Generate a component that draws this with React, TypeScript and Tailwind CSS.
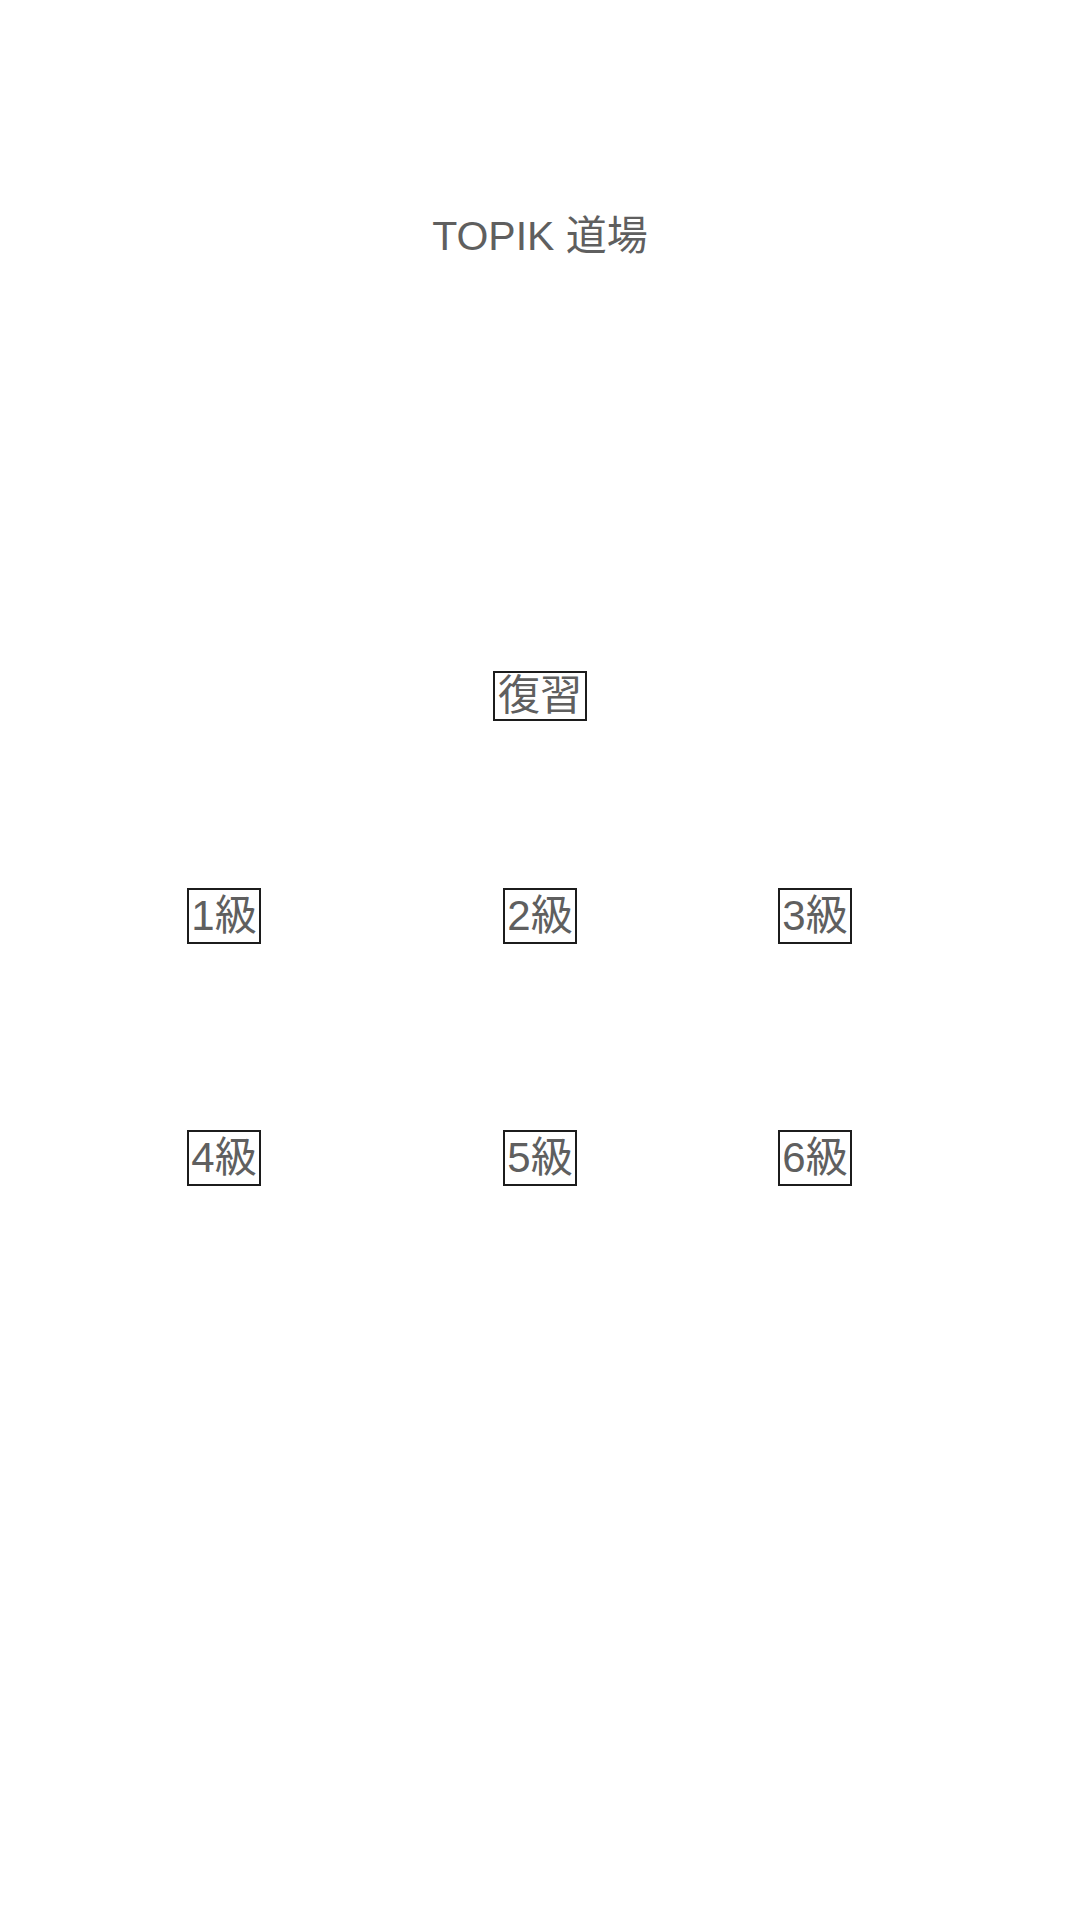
const font = { fontFamily: '"Liberation Sans", "Noto Sans CJK JP", sans-serif' }

const rows = [
  ['1級', '2級', '3級'],
  ['4級', '5級', '6級'],
]

function LevelBox({ label }: { label: string }) {
  return (
    <button className="flex h-[56px] w-[74px] items-center justify-center border-2 border-[#1c1c1c] text-[42px] leading-none text-[#5f5f5f]">
      {label}
    </button>
  )
}

export default function App() {
  return (
    <div className="flex min-h-[1920px] w-full flex-col items-center bg-white" style={font}>
      <h1 className="mt-[213px] h-[46px] text-[41px] font-normal leading-[46px] text-[#5f5f5f]">
        TOPIK 道場
      </h1>

      <button className="mt-[412px] flex h-[50px] w-[94px] items-center justify-center border-2 border-[#1c1c1c] text-[42px] leading-none text-[#5f5f5f]">
        復習
      </button>

      <div className="mt-[167px] flex w-full flex-col gap-[186px]">
        {rows.map((row, i) => (
          <div key={i} className="flex w-full">
            <div className="ml-[187px]">
              <LevelBox label={row[0]} />
            </div>
            <div className="ml-[242px]">
              <LevelBox label={row[1]} />
            </div>
            <div className="ml-[201px]">
              <LevelBox label={row[2]} />
            </div>
          </div>
        ))}
      </div>
    </div>
  )
}
